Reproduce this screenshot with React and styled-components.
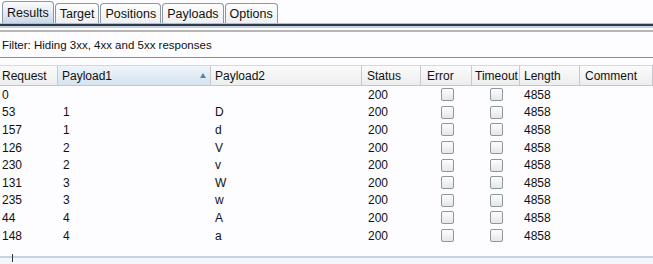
import React from "react";
import styled, { createGlobalStyle } from "styled-components";

const GlobalStyle = createGlobalStyle`
  html, body {
    margin: 0;
    padding: 0;
    background: #fdfcfe;
    font-family: "Liberation Sans", Arial, sans-serif;
    font-size: 12px;
    color: #111;
  }
`;

const COLS = "58px 153px 151px 59px 51px 48px 60px 1fr";

const rows = [
  { req: "0", p1: "", p2: "" },
  { req: "53", p1: "1", p2: "D" },
  { req: "157", p1: "1", p2: "d" },
  { req: "126", p1: "2", p2: "V" },
  { req: "230", p1: "2", p2: "v" },
  { req: "131", p1: "3", p2: "W" },
  { req: "235", p1: "3", p2: "w" },
  { req: "44", p1: "4", p2: "A" },
  { req: "148", p1: "4", p2: "a" },
];

const tabs = ["Results", "Target", "Positions", "Payloads", "Options"];

const Page = styled.div`
  width: 653px;
  height: 264px;
  display: flex;
  flex-direction: column;
  overflow: hidden;
  background: #fdfcfe;
`;

const TabStrip = styled.div`
  display: flex;
  align-items: flex-end;
  height: 23px;
  padding-left: 2px;
  border-bottom: 1px solid #b4bdca;
`;

const Tab = styled.div`
  height: ${(p) => (p.$active ? "22px" : "20px")};
  padding: 0 4px;
  margin-right: 1px;
  display: flex;
  align-items: center;
  border: 1px solid #8c96a4;
  border-bottom: none;
  border-radius: 4px 4px 0 0;
  font-size: 12.5px;
  color: #111;
  background: ${(p) =>
    p.$active
      ? "linear-gradient(#fbfcfe, #dfe8f3 60%, #c9d7e8)"
      : "linear-gradient(#fdfdfd, #eef0f3)"};
  box-sizing: border-box;
`;

const TabRule = styled.div`
  height: 2px;
  background: #2c3a4e;
  border-bottom: 2px solid #c6d2e2;
`;

const FilterBar = styled.div`
  margin-top: 2px;
  height: 25px;
  border-top: 2px solid #b6b6b8;
  border-bottom: 1px solid #8e8c90;
  display: flex;
  align-items: center;
  padding-left: 2px;
  font-size: 11.5px;
  color: #111;
`;

const Table = styled.div`
  margin-top: 7px;
  flex: 1;
  display: flex;
  flex-direction: column;
`;

const HeaderRow = styled.div`
  display: grid;
  grid-template-columns: ${COLS};
  height: 19px;
  border-top: 1px solid #d8d8dc;
  border-bottom: 1px solid #c6c6c8;
  background: linear-gradient(#fbfbfb, #eceded);
`;

const HeadCell = styled.div`
  position: relative;
  display: flex;
  align-items: center;
  padding-left: ${(p) => p.$pad || 4}px;
  border-right: 1px solid #c8c8cc;
  font-size: 12px;
  color: #111;
  background: ${(p) =>
    p.$sorted ? "linear-gradient(#eef4fa, #d6e3f0)" : "transparent"};
`;

const SortArrow = styled.span`
  position: absolute;
  right: 4px;
  top: 7px;
  width: 0;
  height: 0;
  border-left: 3px solid transparent;
  border-right: 3px solid transparent;
  border-bottom: 5px solid #5a82b0;
`;

const Row = styled.div`
  display: grid;
  grid-template-columns: ${COLS};
  height: 17.6px;
  align-items: center;
`;

const Cell = styled.div`
  padding-left: ${(p) => p.$pad || 4}px;
  font-size: 12px;
  color: #111;
  white-space: nowrap;
`;

const BoxCell = styled.div`
  display: flex;
  justify-content: ${(p) => p.$align || "center"};
  padding-left: ${(p) => p.$pad || 0}px;
`;

const CheckBox = styled.span`
  width: 11px;
  height: 11px;
  border: 1px solid #8f969e;
  border-radius: 2px;
  background: linear-gradient(#fdfdfd, #e4e6e9);
`;

const Spacer = styled.div`
  flex: 1;
`;

const ScrollBar = styled.div`
  height: 6px;
  border-top: 2px solid #c4d2e4;
  background: #f4f6fa;
  position: relative;
`;

const ScrollTick = styled.span`
  position: absolute;
  left: 12px;
  top: -4px;
  width: 1px;
  height: 8px;
  background: #333;
`;

export default function App() {
  return (
    <Page>
      <GlobalStyle />
      <TabStrip>
        {tabs.map((t, i) => (
          <Tab key={t} $active={i === 0}>
            {t}
          </Tab>
        ))}
      </TabStrip>
      <TabRule />
      <FilterBar>Filter: Hiding 3xx, 4xx and 5xx responses</FilterBar>
      <Table>
        <HeaderRow>
          <HeadCell $pad={2}>Request</HeadCell>
          <HeadCell $sorted>
            Payload1
            <SortArrow />
          </HeadCell>
          <HeadCell>Payload2</HeadCell>
          <HeadCell $pad={5}>Status</HeadCell>
          <HeadCell $pad={6}>Error</HeadCell>
          <HeadCell $pad={3}>Timeout</HeadCell>
          <HeadCell>Length</HeadCell>
          <HeadCell $pad={5}>Comment</HeadCell>
        </HeaderRow>
        {rows.map((r) => (
          <Row key={r.req}>
            <Cell $pad={2}>{r.req}</Cell>
            <Cell $pad={5}>{r.p1}</Cell>
            <Cell>{r.p2}</Cell>
            <Cell $pad={6}>200</Cell>
            <BoxCell $align="flex-start" $pad={20}>
              <CheckBox />
            </BoxCell>
            <BoxCell $align="flex-start" $pad={18}>
              <CheckBox />
            </BoxCell>
            <Cell>4858</Cell>
            <Cell />
          </Row>
        ))}
        <Spacer />
        <ScrollBar>
          <ScrollTick />
        </ScrollBar>
      </Table>
    </Page>
  );
}
